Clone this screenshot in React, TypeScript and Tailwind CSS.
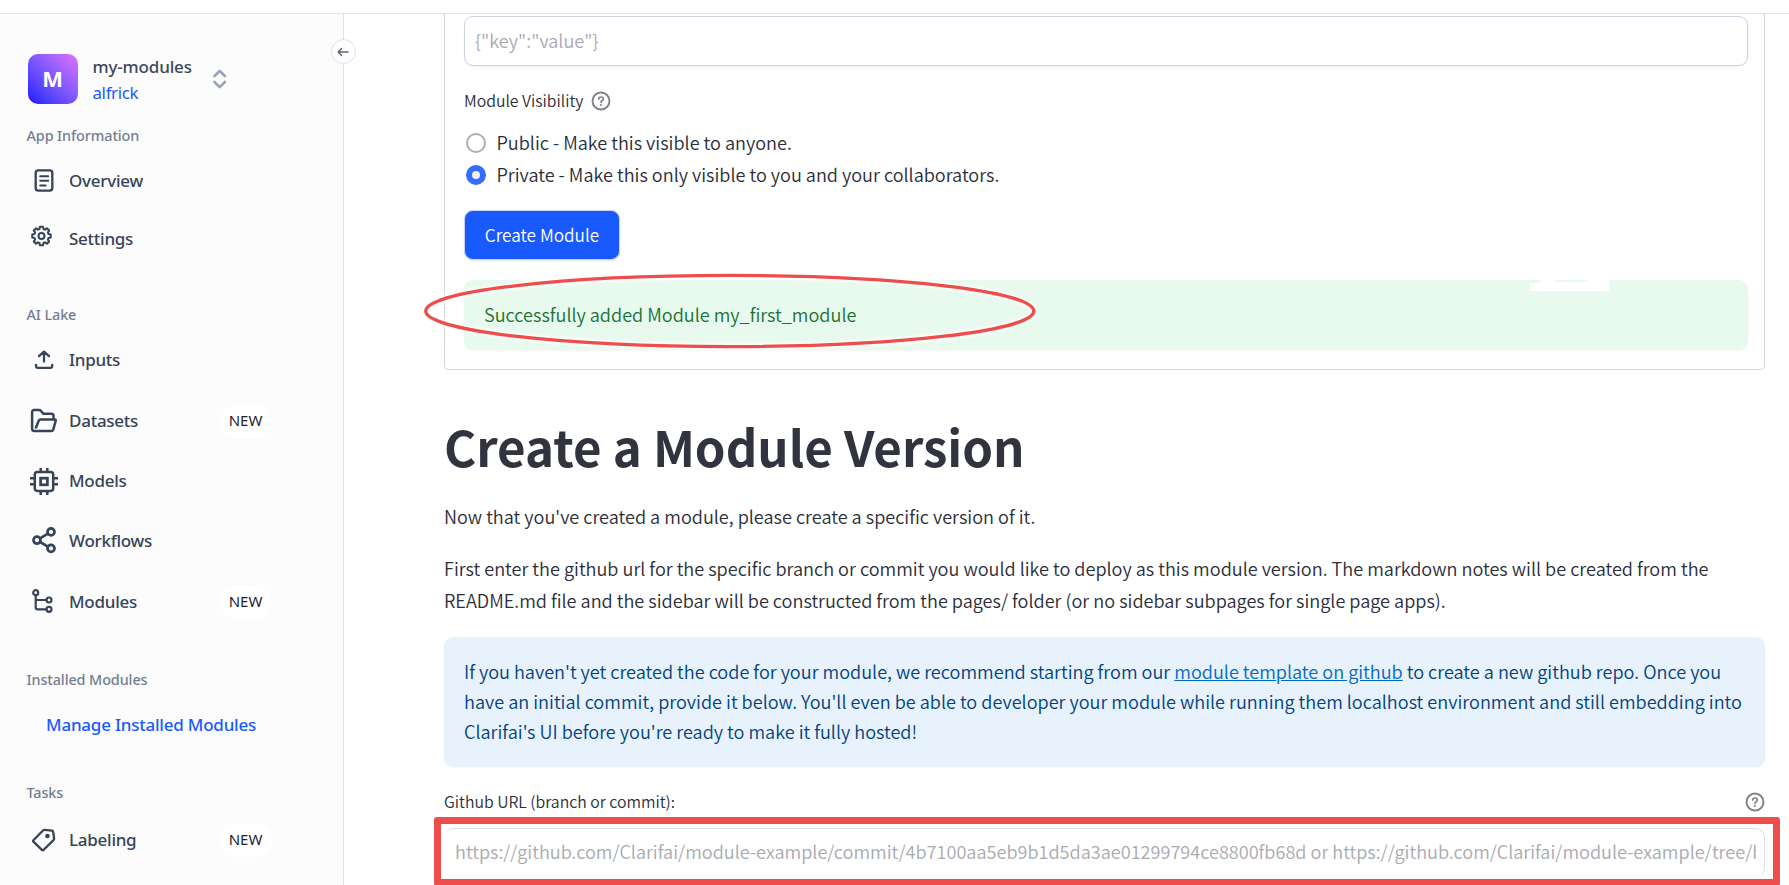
import type { ReactNode } from "react";

const SIDEBAR_FONT = "font-['Noto_Sans','Open_Sans',sans-serif]";
const MAIN_FONT = "font-['Noto_Sans_CJK_SC','Open_Sans',sans-serif]";

function Icon({ children, width = 2.3 }: { children: ReactNode; width?: number }) {
  return (
    <svg
      className="h-7 w-7 shrink-0"
      viewBox="0 0 28 28"
      fill="none"
      stroke="currentColor"
      strokeWidth={width}
      strokeLinecap="round"
      strokeLinejoin="round"
    >
      {children}
    </svg>
  );
}

const gearPoints = Array.from({ length: 8 }, (_, i) => {
  const base = (i * Math.PI) / 4 - Math.PI / 2;
  return [
    [-0.27, 7.3],
    [-0.17, 9.4],
    [0.17, 9.4],
    [0.27, 7.3],
  ].map(([a, r]) => `${(11.5 + r * Math.cos(base + a)).toFixed(2)},${(11 + r * Math.sin(base + a)).toFixed(2)}`);
})
  .flat()
  .join(" ");

const OverviewIcon = () => (
  <Icon>
    <rect x="5.7" y="3.4" width="16.6" height="20.2" rx="2.6" />
    <path d="M10.2 9.2h8M10.2 13.8h8M10.2 18.6h5.4" strokeWidth="2" />
  </Icon>
);
const SettingsIcon = () => (
  <Icon width={2}>
    <polygon points={gearPoints} />
    <circle cx="11.5" cy="11" r="3" />
  </Icon>
);
const InputsIcon = () => (
  <Icon>
    <path d="M14 15.6V5.8M9 10.2l5-4.6 5 4.6" />
    <path d="M6 18.8v1.2q0 1.9 1.9 1.9h12.4q1.9 0 1.9-1.9v-1.2" />
  </Icon>
);
const DatasetsIcon = () => (
  <Icon width={2.5}>
    <path d="M23.5 12.5V9q0-2.2-2.2-2.2h-7.8L11 4q-.8-.9-2-.9H4.2Q2.1 3.1 2.1 5.3v16.5Q2.1 24 4.3 24h17.2q1.3 0 1.7-1.2l2.6-9.5q0-.8-.8-.8H10.5q-1.2 0-1.7 1L6 20.5" />
  </Icon>
);
const ModelsIcon = () => (
  <Icon width={2.5}>
    <rect x="4.8" y="5.1" width="18.4" height="18.8" rx="2.6" />
    <rect x="10.6" y="11.2" width="6.8" height="6.6" strokeWidth="2.7" strokeLinejoin="miter" />
    <path
      strokeLinecap="butt"
      d="M10.7 1v4M17.3 1v4M10.7 24v4M17.3 24v4M0 11.3h4.6M0 17.2h4.6M23.4 11.3H28M23.4 17.2H28"
    />
  </Icon>
);
const WorkflowsIcon = () => (
  <Icon width={2.7}>
    <circle cx="7" cy="13.2" r="3.5" />
    <circle cx="21" cy="4.9" r="3.5" />
    <circle cx="21" cy="21.4" r="3.5" />
    <path d="M10.1 11.4l7.8-4.7M10.1 15l7.8 4.6" />
  </Icon>
);
const ModulesIcon = () => (
  <Icon width={2.2}>
    <circle cx="5.7" cy="4.7" r="2.5" />
    <circle cx="19" cy="12" r="2.5" />
    <circle cx="19" cy="21.3" r="2.5" />
    <path d="M5.7 7.4V19.2q0 2.1 2.1 2.1h8.5M5.9 12h10.4" />
  </Icon>
);
const LabelingIcon = () => (
  <Icon>
    <path d="M3.4 14.2L13 4.5q.8-.8 1.9-.7l7 .8q1 .1 1.2 1.1l1 6.6q.1 1-.6 1.8L13.7 23.8q-.9.8-1.8 0l-8.5-8.2q-.7-.7 0-1.4z" />
    <circle cx="17.4" cy="10" r="1.1" />
  </Icon>
);

function HelpIcon() {
  return (
    <svg className="h-5 w-5 shrink-0 text-[#808188]" viewBox="0 0 20 20" fill="none" stroke="currentColor" strokeWidth="1.9" strokeLinecap="round">
      <circle cx="10" cy="10" r="8.5" />
      <path d="M7.7 8.1c0-1.3 1-2.1 2.3-2.1s2.3.8 2.3 2c0 1.7-2.3 1.8-2.3 3.3" strokeWidth="1.7" />
      <circle cx="10" cy="14" r=".5" strokeWidth="1.1" />
    </svg>
  );
}

function Heading({ className, children }: { className: string; children: ReactNode }) {
  return (
    <div className={`h-5 pl-[26.5px] text-[14.4px] leading-5 font-medium tracking-[-0.1px] text-[#747d92] ${className}`}>
      {children}
    </div>
  );
}

function Item({ icon, label, isNew, className }: { icon: ReactNode; label: string; isNew?: boolean; className: string }) {
  return (
    <a className={`flex h-[46px] items-center pl-[30px] text-[#364358] ${className}`}>
      {icon}
      <span className="ml-[11px] w-[150.5px] text-[17px] font-medium tracking-[-0.26px]">{label}</span>
      {isNew && (
        <span className="flex h-[33px] w-[52px] items-center justify-center rounded-full bg-white pb-px text-[15px] text-[#231f33]">
          NEW
        </span>
      )}
    </a>
  );
}

function Sidebar() {
  return (
    <aside className={`relative h-full w-[344px] shrink-0 border-r border-[#e1e1e4] bg-[#fcfcfc] ${SIDEBAR_FONT}`}>
      <button className="absolute top-[25px] right-[-13px] flex h-[25px] w-[25px] items-center justify-center rounded-full border border-[#e1e2e8] bg-white text-[#5d6579]">
        <svg className="mr-px h-3 w-3" viewBox="0 0 12 12" fill="none" stroke="currentColor" strokeWidth="1.5" strokeLinecap="round" strokeLinejoin="round">
          <path d="M11 6H1.2M4.6 2.5L1.2 6l3.4 3.5" />
        </svg>
      </button>
      <div className="flex h-[91px] items-center pt-10 pl-7">
        <div className="-mt-px flex h-[50px] w-[50px] shrink-0 items-center justify-center rounded-[10px] bg-linear-45 from-[#1a05ff] to-[#e070ff] pr-px pb-px text-[22px] font-bold text-white">
          M
        </div>
        <div className="ml-[14.5px] w-[120px] text-[17px] leading-[26px] tracking-[-0.15px]">
          <div className="font-medium text-[#3c485b]">my-modules</div>
          <div className="text-[16.8px] tracking-[-0.3px] text-[#195aff]">alfrick</div>
        </div>
        <svg className="-mt-px h-5 w-[14px]" viewBox="0 0 14 20" fill="none" stroke="#98a3b8" strokeWidth="2.6" strokeLinecap="round" strokeLinejoin="round">
          <path d="M1.5 7L6.7 1.8 11.9 7M1.5 13L6.7 18.2l5.2-5.2" />
        </svg>
      </div>
      <Heading className="mt-[21px]">App Information</Heading>
      <Item className="mt-3" icon={<OverviewIcon />} label="Overview" />
      <Item className="mt-3" icon={<SettingsIcon />} label="Settings" />
      <Heading className="mt-[43px]">AI Lake</Heading>
      <Item className="mt-3" icon={<InputsIcon />} label="Inputs" />
      <Item className="mt-[15px]" icon={<DatasetsIcon />} label="Datasets" isNew />
      <Item className="mt-[14px]" icon={<ModelsIcon />} label="Models" />
      <Item className="mt-[14px]" icon={<WorkflowsIcon />} label="Workflows" />
      <Item className="mt-[15px]" icon={<ModulesIcon />} label="Modules" isNew />
      <Heading className="mt-[45px]">Installed Modules</Heading>
      <a className="mt-3 flex h-[46px] items-center pl-[46px] text-[17px] font-medium tracking-[-0.22px] text-[#195aff]">
        Manage Installed Modules
      </a>
      <Heading className="mt-[35px]">Tasks</Heading>
      <Item className="mt-[14px]" icon={<LabelingIcon />} label="Labeling" isNew />
    </aside>
  );
}

function Radio({ checked, children }: { checked?: boolean; children: ReactNode }) {
  return (
    <label className="flex h-8 items-center">
      {checked ? (
        <span className="ml-[2px] h-5 w-5 rounded-full border-[6.5px] border-[#346cff] bg-[#f0f2f6]" />
      ) : (
        <span className="ml-[2px] h-5 w-5 rounded-full border-[2.5px] border-[#adaeb3] bg-white" />
      )}
      <span className="ml-[10.5px]">{children}</span>
    </label>
  );
}

function ModuleForm() {
  return (
    <section className="relative h-[356px] rounded-b-[5px] border border-t-0 border-[#d3d4d8] pt-[2px] pr-[16px] pl-[19px]">
      <div className="flex h-[50px] items-center rounded-[9px] border border-[#cdd1de] pl-[10px] text-[#a9aab0] shadow-[0_1px_2px_rgba(0,0,40,0.05)]">
        {'{"key":"value"}'}
      </div>
      <div className="mt-[24px] flex h-[22px] items-center text-[15.8px]">
        Module Visibility
        <span className="ml-[7.5px]">
          <HelpIcon />
        </span>
      </div>
      <div className="mt-[15px]">
        <Radio>Public - Make this visible to anyone.</Radio>
        <Radio checked>Private - Make this only visible to you and your collaborators.</Radio>
      </div>
      <button className="mt-[19px] flex h-[50px] w-[156px] items-center justify-center rounded-[9px] border border-[#c9d3ef] bg-[#195aff] text-[17.2px] text-white shadow-[0_1px_2px_rgba(0,0,40,0.1)]">
        Create Module
      </button>
      <div className="relative mt-[20px] flex h-[70px] items-center rounded-[9px] bg-[#e8f9ee] pl-5 text-[#177233] shadow-[0_1px_2px_rgba(60,0,0,0.05)]">
        Successfully added Module my_first_module
        <svg className="absolute top-0 right-[138px] h-[11px] w-20" viewBox="0 0 80 11" fill="#fff">
          <path d="M0 3.2L6 3 11 1V0h14v2h30V1l7-1h17v4l1 3-1 4H0z" />
        </svg>
      </div>
      <svg className="absolute top-[252px] left-[-24px] h-[90px] w-[620px]" viewBox="0 0 620 90" fill="none">
        <defs>
          <filter id="halo" x="-5%" y="-20%" width="110%" height="140%">
            <feGaussianBlur stdDeviation="1.6" />
          </filter>
        </defs>
        <ellipse cx="308.8" cy="45" rx="304" ry="35.6" stroke="#fff" strokeWidth="7" opacity=".85" filter="url(#halo)" />
        <ellipse cx="308.8" cy="45" rx="304" ry="35.6" stroke="#ed4e4b" strokeWidth="3.4" />
      </svg>
    </section>
  );
}

export default function App() {
  return (
    <div className="flex h-[885px] w-full flex-col overflow-hidden bg-white">
      <header className="h-[14px] shrink-0 border-b border-[#e4e4e7]" />
      <div className="flex min-h-0 flex-1">
        <Sidebar />
        <main className={`w-[1421px] shrink-0 pl-[100px] text-[18.1px] font-[350] text-[#2b2d39] ${MAIN_FONT}`}>
          <ModuleForm />
          <h1 className="mt-[46px] h-[60px] text-[49.2px] leading-[60px] font-bold text-[#31333f]">Create a Module Version</h1>
          <p className="mt-[24px] leading-8">
            Now that you've created a module, please create a specific version of it.
          </p>
          <p className="mt-5 leading-8 whitespace-nowrap">
            First enter the github url for the specific branch or commit you would like to deploy as this module version. The markdown notes will be created from the
            <br />
            README.md file and the sidebar will be constructed from the pages/ folder (or no sidebar subpages for single page apps).
          </p>
          <div className="mt-[21px] h-[130px] rounded-[9px] bg-[#e8f2fc] pt-[19px] pl-5 leading-[30px] whitespace-nowrap text-[#004280] shadow-[0_1px_2px_rgba(0,0,40,0.04)]">
            If you haven't yet created the code for your module, we recommend starting from our{" "}
            <a className="text-[#0068c9] underline">module template on github</a> to create a new github repo. Once you
            <br />
            have an initial commit, provide it below. You'll even be able to developer your module while running them localhost environment and still embedding into
            <br />
            Clarifai's UI before you're ready to make it fully hosted!
          </div>
          <div className="mt-[24px] flex h-[22px] items-center justify-between text-[15.8px]">
            Github URL (branch or commit):
            <HelpIcon />
          </div>
          <div className="relative mt-[15px] flex h-[49px] items-center rounded-[9px] border border-[#dcdde6] border-b-transparent border-l-transparent pr-[8px] pl-[10px] text-[#a9aab0]">
            <span className="-mt-[2px] overflow-hidden whitespace-nowrap">
              https://github.com/Clarifai/module-example/commit/4b7100aa5eb9b1d5da3ae01299794ce8800fb68d or https://github.com/Clarifai/module-example/tree/branch
            </span>
            <div className="absolute -top-[12px] -right-[16px] -left-[11px] h-[69px] rounded-[3px] border-[7px] border-[#ed4e4b]" />
          </div>
        </main>
      </div>
    </div>
  );
}
